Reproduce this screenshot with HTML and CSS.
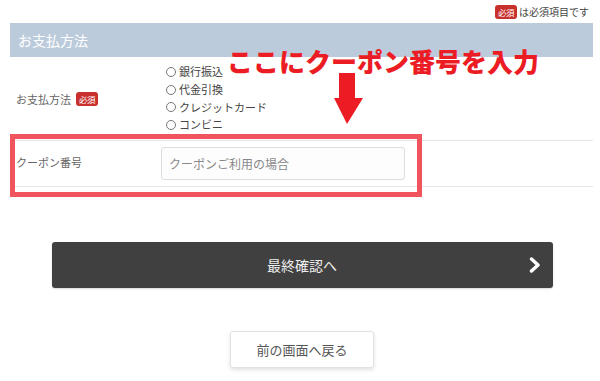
FILE: index.html
```html
<!DOCTYPE html>
<html lang="ja">
<head>
<meta charset="utf-8">
<link rel="stylesheet" href="styles.css">
</head>
<body>
<div class="page">
  <div class="note"><span class="badge">必須</span>は必須項目です</div>
  <div class="section-head">お支払方法</div>
  <div class="row pay-row">
    <div class="label">お支払方法<span class="badge">必須</span></div>
    <div class="options">
      <div class="opt"><span class="radio"></span>銀行振込</div>
      <div class="opt"><span class="radio"></span>代金引換</div>
      <div class="opt"><span class="radio"></span>クレジットカード</div>
      <div class="opt"><span class="radio"></span>コンビニ</div>
    </div>
  </div>
  <div class="row coupon-row">
    <div class="label">クーポン番号</div>
    <div class="field"><input class="input" type="text" placeholder="クーポンご利用の場合"></div>
  </div>
  <div class="actions">
    <button class="btn-next">最終確認へ<svg class="chev" width="12" height="16" viewBox="0 0 12 16"><polyline points="2.5,2 9,8 2.5,14" fill="none" stroke="#fff" stroke-width="3.4" stroke-linecap="round" stroke-linejoin="round"/></svg></button>
    <button class="btn-back">前の画面へ戻る</button>
  </div>

  <div class="callout">ここにクーポン番号を入力</div>
  <svg class="arrow" width="30" height="52" viewBox="0 0 30 52"><polygon points="5,0 21,0 21,25 29,25 13,51 0,25 5,25" fill="#ec1c24" transform="translate(0,0)"/></svg>
  <div class="hl-box"></div>
</div>
</body>
</html>
```
FILE: styles.css
```css
* { box-sizing: border-box; }
html, body { margin: 0; padding: 0; background: #fff; }
body {
  font-family: "Noto Sans CJK JP", "Noto Sans", sans-serif;
  color: #555;
  width: 600px;
  height: 381px;
  overflow: hidden;
}
.page {
  position: relative;
  margin-left: 10px;
  width: 583px;
}
.note {
  height: 23px;
  display: flex;
  justify-content: flex-end;
  align-items: center;
  padding-right: 4px;
  font-size: 10px;
  color: #444;
}
.badge {
  display: inline-block;
  background: #c8302c;
  color: #fff;
  font-size: 8.5px;
  line-height: 14px;
  height: 14px;
  padding: 0 3px;
  border-radius: 3px;
  margin-right: 2px;
  letter-spacing: -0.5px;
}
.section-head {
  height: 34px;
  background: #bccbdc;
  color: #fff;
  font-size: 14px;
  line-height: 34px;
  padding-left: 8px;
}
.row {
  display: flex;
  align-items: center;
  border-bottom: 1px solid #e6e6e6;
}
.label {
  width: 151px;
  padding-left: 6px;
  font-size: 11px;
  color: #666;
  display: flex;
  align-items: center;
}
.label .badge { margin-left: 5px; margin-right: 0; }
.pay-row {
  height: 84px;
  padding: 6px 0 6px;
}
.options { padding-left: 5px; }
.opt {
  display: flex;
  align-items: center;
  font-size: 11px;
  line-height: 17.7px;
  color: #444;
}
.radio {
  width: 10px;
  height: 10px;
  border: 1px solid #777;
  border-radius: 50%;
  margin-right: 3px;
}
.coupon-row { height: 46px; }
.coupon-row .label { margin-top: -4px; }
.field { display: flex; }
.input {
  width: 244px;
  height: 33px;
  border: 1px solid #ddd;
  border-radius: 3px;
  background: #fdfdfd;
  font-family: inherit;
  font-size: 12px;
  padding: 0 7px;
  margin: 0;
  outline: none;
}
.input::placeholder { color: #888; }
.actions {
  display: flex;
  flex-direction: column;
  align-items: center;
  padding-top: 55px;
}
.btn-next {
  position: relative;
  width: 501px;
  height: 46px;
  margin-left: 1px;
  background: #404040;
  border: none;
  border-radius: 3px;
  color: #eee;
  font-family: inherit;
  font-size: 14px;
  box-shadow: 0 1px 2px rgba(0,0,0,0.15);
}
.chev {
  position: absolute;
  right: 12px;
  top: 15px;
}
.btn-back {
  margin-top: 43px;
  width: 144px;
  height: 37px;
  background: #fff;
  border: 1px solid #e2e2e2;
  border-radius: 3px;
  box-shadow: 0 2px 4px rgba(0,0,0,0.12);
  color: #555;
  font-family: inherit;
  font-size: 13px;
  margin-left: 1px;
}
.callout {
  position: absolute;
  left: 217px;
  top: 43px;
  font-size: 26px;
  font-weight: 900;
  color: #ec1c24;
  line-height: 36px;
  white-space: nowrap;
}
.arrow {
  position: absolute;
  left: 324px;
  top: 73px;
}
.hl-box {
  position: absolute;
  left: 0;
  top: 134px;
  width: 412px;
  height: 63px;
  border: 5px solid #f0545c;
}
```
